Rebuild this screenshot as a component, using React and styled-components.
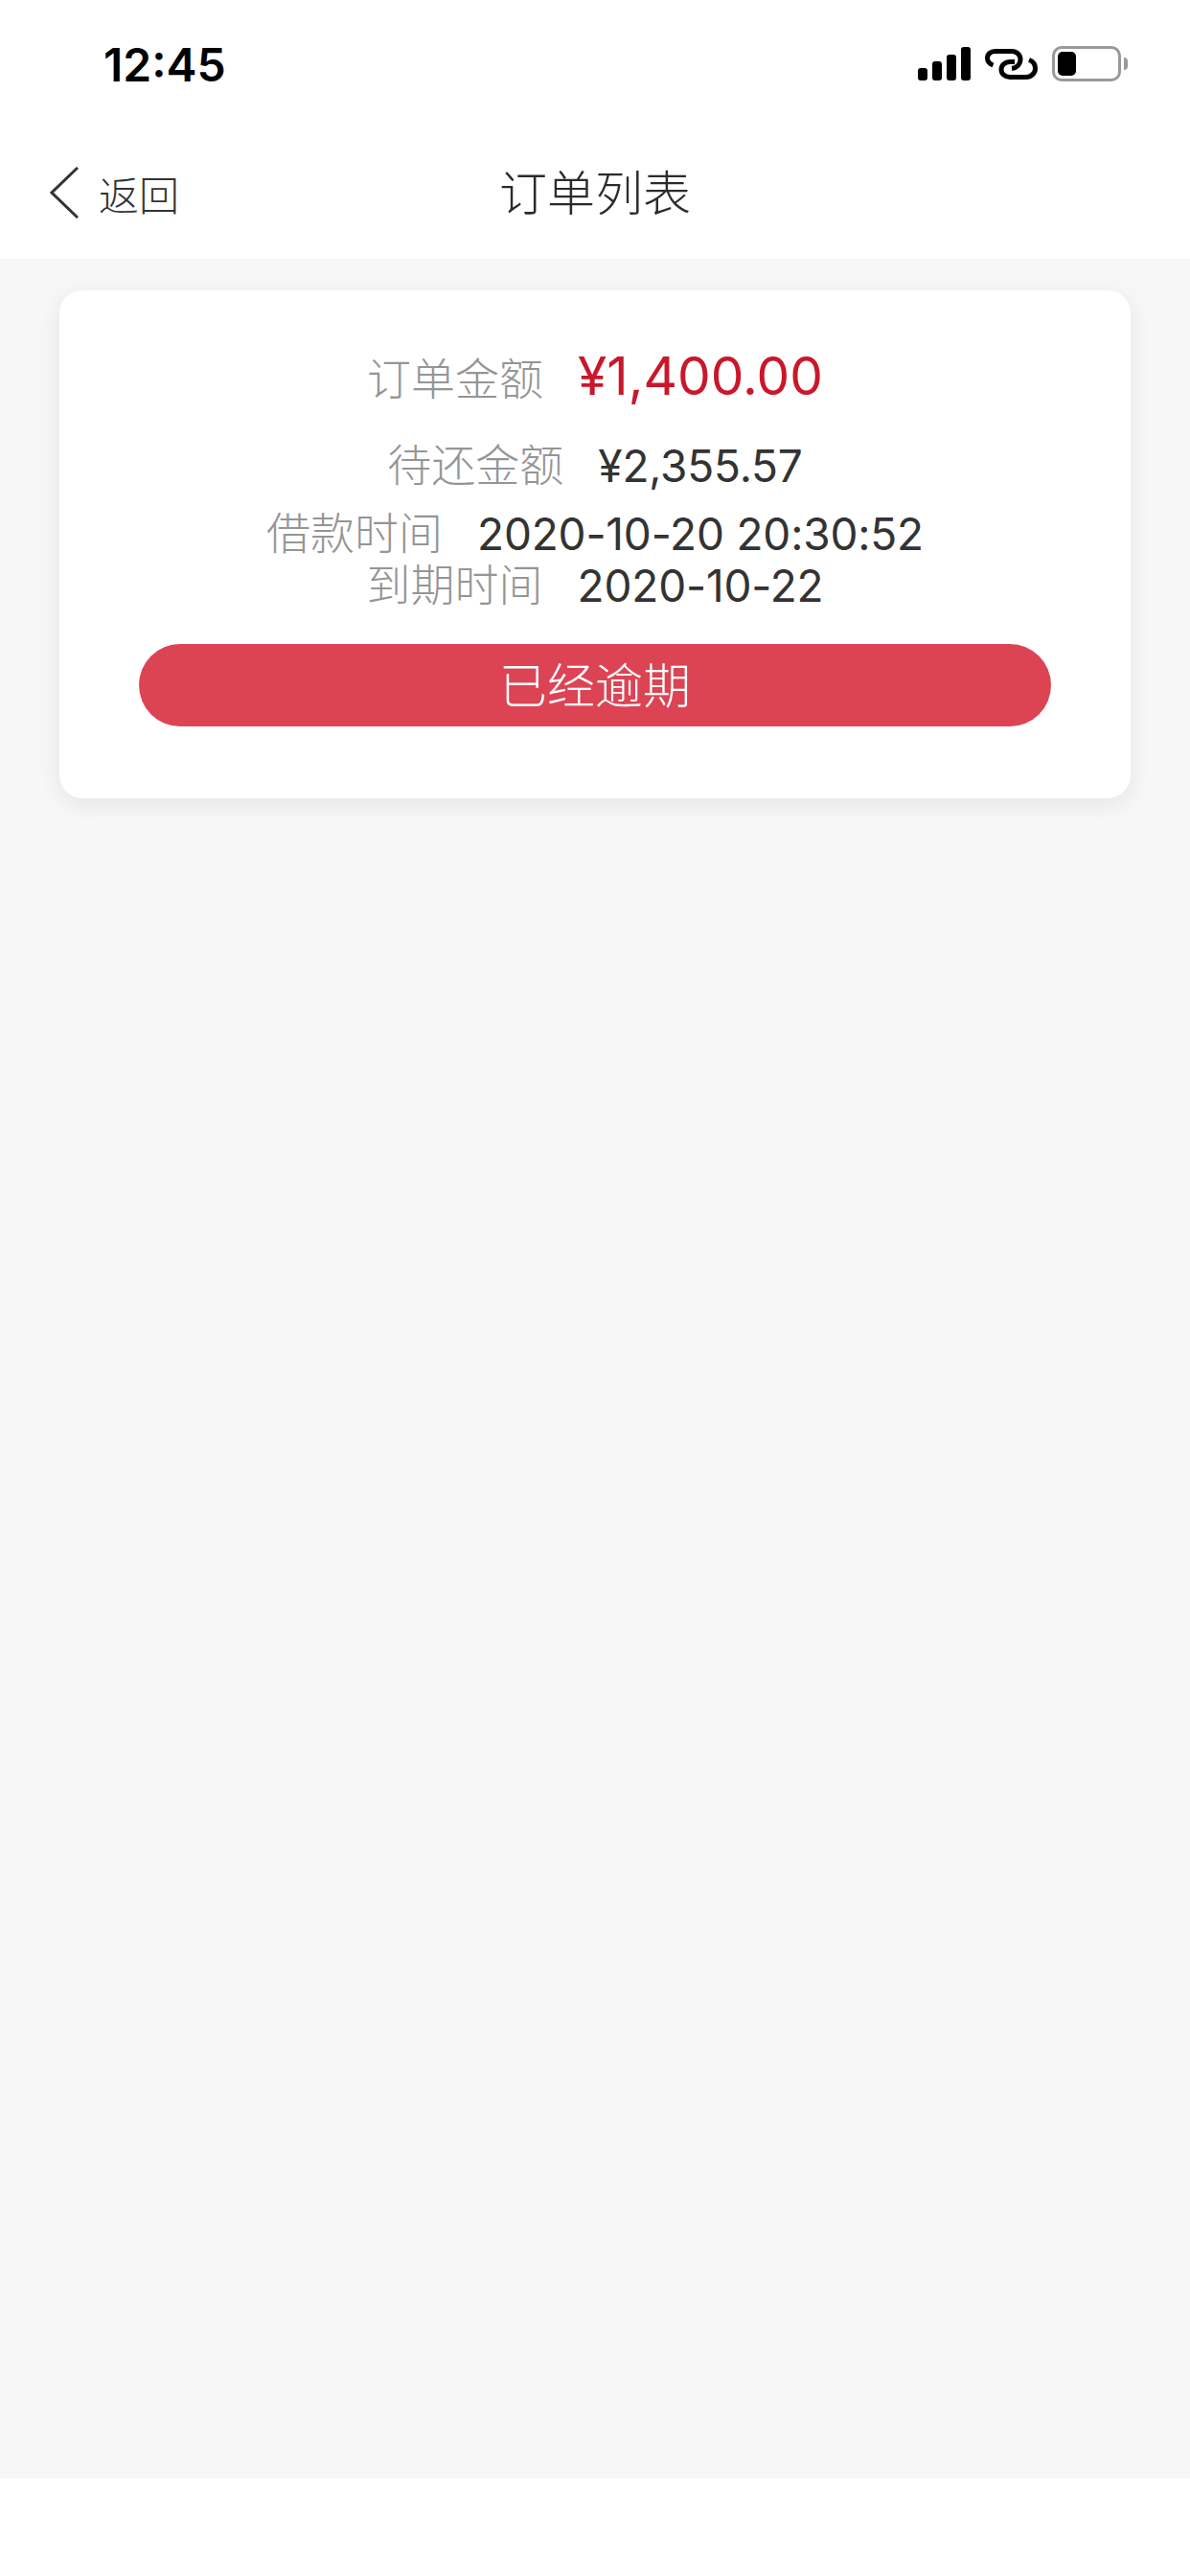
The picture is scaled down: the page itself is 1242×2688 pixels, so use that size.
import React from 'react';
import styled, { createGlobalStyle } from 'styled-components';

const GlobalStyle = createGlobalStyle`
  html, body {
    margin: 0;
    padding: 0;
    background: #fff;
  }
  * {
    box-sizing: border-box;
  }
`;

const fontStack = `Inter, "Noto Sans CJK SC", sans-serif`;

const Page = styled.div`
  width: 1242px;
  height: 2688px;
  display: flex;
  flex-direction: column;
  background: #fff;
  font-family: ${fontStack};
`;

const StatusBar = styled.div`
  height: 135px;
  padding: 43px 65px 0 108px;
  display: flex;
  justify-content: space-between;
  align-items: flex-start;
`;

const Clock = styled.div`
  font-weight: 600;
  font-size: 48px;
  line-height: 50px;
  color: #000;
`;

const StatusIcons = styled.div`
  display: flex;
  align-items: center;
  gap: 15px;
  margin-top: 5px;
`;

const NavBar = styled.div`
  height: 135px;
  display: grid;
  grid-template-columns: 1fr auto 1fr;
  align-items: center;
  padding-bottom: 4px;
`;

const BackLink = styled.div`
  display: flex;
  align-items: center;
  gap: 21px;
  margin-left: 52px;
  font-size: 42px;
  color: #333;
  font-weight: 300;
`;

const BackText = styled.span`
  margin-top: 8px;
  line-height: 50px;
`;

const Title = styled.div`
  font-size: 50px;
  font-weight: 300;
  color: #2b2b2b;
  line-height: 60px;
  margin-top: 2px;
`;

const Content = styled.div`
  flex: 1;
  background: #f7f7f7;
  padding: 33px 62px 0;
`;

const Card = styled.div`
  height: 530px;
  background: #fff;
  border-radius: 24px;
  box-shadow: 0 6px 24px rgba(0, 0, 0, 0.08);
  padding: 58px 83px 0;
  display: flex;
  flex-direction: column;
  align-items: center;
`;

const Row = styled.div`
  display: flex;
  align-items: center;
  justify-content: center;
  gap: 36px;
  height: ${(p) => p.$height}px;
  margin-top: ${(p) => p.$top || 0}px;
`;

const Label = styled.span`
  font-size: 46px;
  font-weight: 300;
  color: #959595;
  margin-top: -8px;
`;

const Value = styled.span`
  font-size: 46px;
  font-weight: 400;
  letter-spacing: -0.2px;
  color: #333;
`;

const Amount = styled.span`
  font-size: 55px;
  font-weight: 400;
  color: #c9172b;
  margin-top: -8px;
`;

const StatusButton = styled.div`
  width: 100%;
  height: 86px;
  margin-top: 34px;
  padding-bottom: 6px;
  border-radius: 43px;
  background: #dc4454;
  color: #fff;
  font-size: 50px;
  font-weight: 300;
  display: flex;
  align-items: center;
  justify-content: center;
`;

const Footer = styled.div`
  height: 102px;
  background: #fff;
`;

const SignalIcon = () => (
  <svg width="55" height="35" viewBox="0 0 55 35">
    <rect x="0" y="22" width="10" height="13" rx="3" fill="#000" />
    <rect x="15" y="15" width="10" height="20" rx="3" fill="#000" />
    <rect x="30" y="8" width="10" height="27" rx="3" fill="#000" />
    <rect x="45" y="0" width="10" height="35" rx="3" fill="#000" />
  </svg>
);

const LinkIcon = () => (
  <svg width="55" height="32" viewBox="0 0 55 32" fill="none" stroke="#000" strokeWidth="5" strokeLinecap="butt">
    <path d="M8.500 17 C4.500 15.500 2.500 12.500 2.500 9.500 C2.500 5.500 6 2.500 10.500 2.500 H28 C33 2.500 37 6 37 11 C37 16 33 20 28 20.500" />
    <path d="M46 11.500 C50 13 52.500 16 52.500 20.500 C52.500 25.500 48 29.500 43 29.500 H26 C21 29.500 17 26 17 21.500 C17 17 21 13.500 26 13.500 H31" />
  </svg>
);

const BatteryOutline = styled.div`
  width: 72px;
  height: 37px;
  border: 3px solid #999;
  border-radius: 10px;
  padding: 3px;
`;

const BatteryFill = styled.div`
  width: 19px;
  height: 100%;
  background: #000;
  border-radius: 5px;
`;

const BatteryWrap = styled.div`
  display: flex;
  align-items: center;
  gap: 3px;
`;

const BatteryNub = styled.div`
  width: 4px;
  height: 13px;
  background: #999;
  border-radius: 0 4px 4px 0;
`;

const BackChevron = () => (
  <svg width="30" height="54" viewBox="0 0 30 54" fill="none" stroke="#333" strokeWidth="3">
    <path d="M29 1 L2 27 L29 53" />
  </svg>
);

export default function App() {
  return (
    <Page>
      <GlobalStyle />
      <StatusBar>
        <Clock>12:45</Clock>
        <StatusIcons>
          <SignalIcon />
          <LinkIcon />
          <BatteryWrap>
            <BatteryOutline>
              <BatteryFill />
            </BatteryOutline>
            <BatteryNub />
          </BatteryWrap>
        </StatusIcons>
      </StatusBar>
      <NavBar>
        <BackLink>
          <BackChevron />
          <BackText>返回</BackText>
        </BackLink>
        <Title>订单列表</Title>
        <div />
      </NavBar>
      <Content>
        <Card>
          <Row $height={70}>
            <Label>订单金额</Label>
            <Amount>¥1,400.00</Amount>
          </Row>
          <Row $height={60} $top={25}>
            <Label>待还金额</Label>
            <Value>¥2,355.57</Value>
          </Row>
          <Row $height={54} $top={14}>
            <Label>借款时间</Label>
            <Value>2020-10-20 20:30:52</Value>
          </Row>
          <Row $height={54}>
            <Label>到期时间</Label>
            <Value>2020-10-22</Value>
          </Row>
          <StatusButton>已经逾期</StatusButton>
        </Card>
      </Content>
      <Footer />
    </Page>
  );
}
